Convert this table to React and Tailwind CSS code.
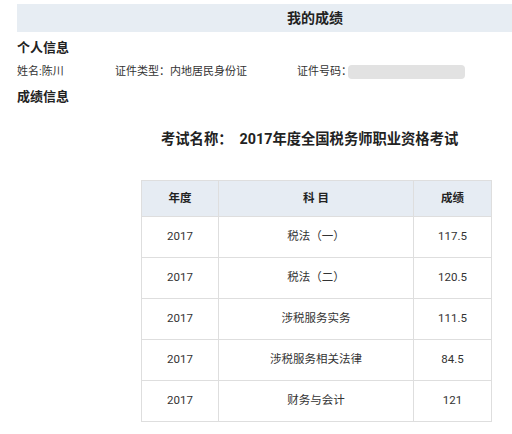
import React from 'react'

const rows = [
    { year: '2017', subject: '税法（一）', score: '117.5' },
    { year: '2017', subject: '税法（二）', score: '120.5' },
    { year: '2017', subject: '涉税服务实务', score: '111.5' },
    { year: '2017', subject: '涉税服务相关法律', score: '84.5' },
    { year: '2017', subject: '财务与会计', score: '121' },
]

const App = () => {
    return (
        <div
            className='w-[512px] h-[434px] bg-white text-[#222] overflow-hidden'
            style={{ fontFamily: 'Roboto, "Noto Sans CJK SC", sans-serif' }}
        >
            <div className="ml-[17px] mt-[4px] h-[28px] bg-[#e7edf3] flex items-center pl-[270px]">
                <h1 className='text-[14px] font-bold'>我的成绩</h1>
            </div>

            <div className="px-[17px]">
                <h2 className='mt-[6px] h-[20px] leading-[20px] text-[13px] font-bold'>个人信息</h2>
                <div className="mt-[4px] h-[20px] flex items-center text-[11px] text-[#333]">
                    <span className='w-[98px]'>姓名:陈川</span>
                    <span className='w-[182px]'>证件类型：内地居民身份证</span>
                    <span>证件号码：</span>
                    <span className='ml-[-4px] w-[117px] h-[14px] rounded-[4px] bg-[#e2e2e2]'></span>
                </div>
                <h2 className='mt-[5px] h-[20px] leading-[20px] text-[13px] font-bold'>成绩信息</h2>
            </div>

            <div className="mt-[21px] pl-[161px] h-[22px] leading-[22px] text-[14.3px] font-bold">
                考试名称：&nbsp; 2017年度全国税务师职业资格考试
            </div>

            <div className="mt-[30px] ml-[141px] w-[351px]">
                <table className='w-full border-collapse text-[11.5px] text-[#333] text-center'>
                    <thead>
                        <tr className='h-[36px] bg-[#e6ecf3] font-bold text-[#222]'>
                            <th className='w-[77px] border border-[#dedede]'>年度</th>
                            <th className='w-[195px] border border-[#dedede]'>科 目</th>
                            <th className='border border-[#dedede]'>成绩</th>
                        </tr>
                    </thead>
                    <tbody>
                        {rows.map((r, i) => (
                            <tr key={i} className='h-[41px]'>
                                <td className='border border-[#dedede]'>{r.year}</td>
                                <td className='border border-[#dedede]'>{r.subject}</td>
                                <td className='border border-[#dedede]'>{r.score}</td>
                            </tr>
                        ))}
                    </tbody>
                </table>
            </div>
        </div>
    )
}

export default App
